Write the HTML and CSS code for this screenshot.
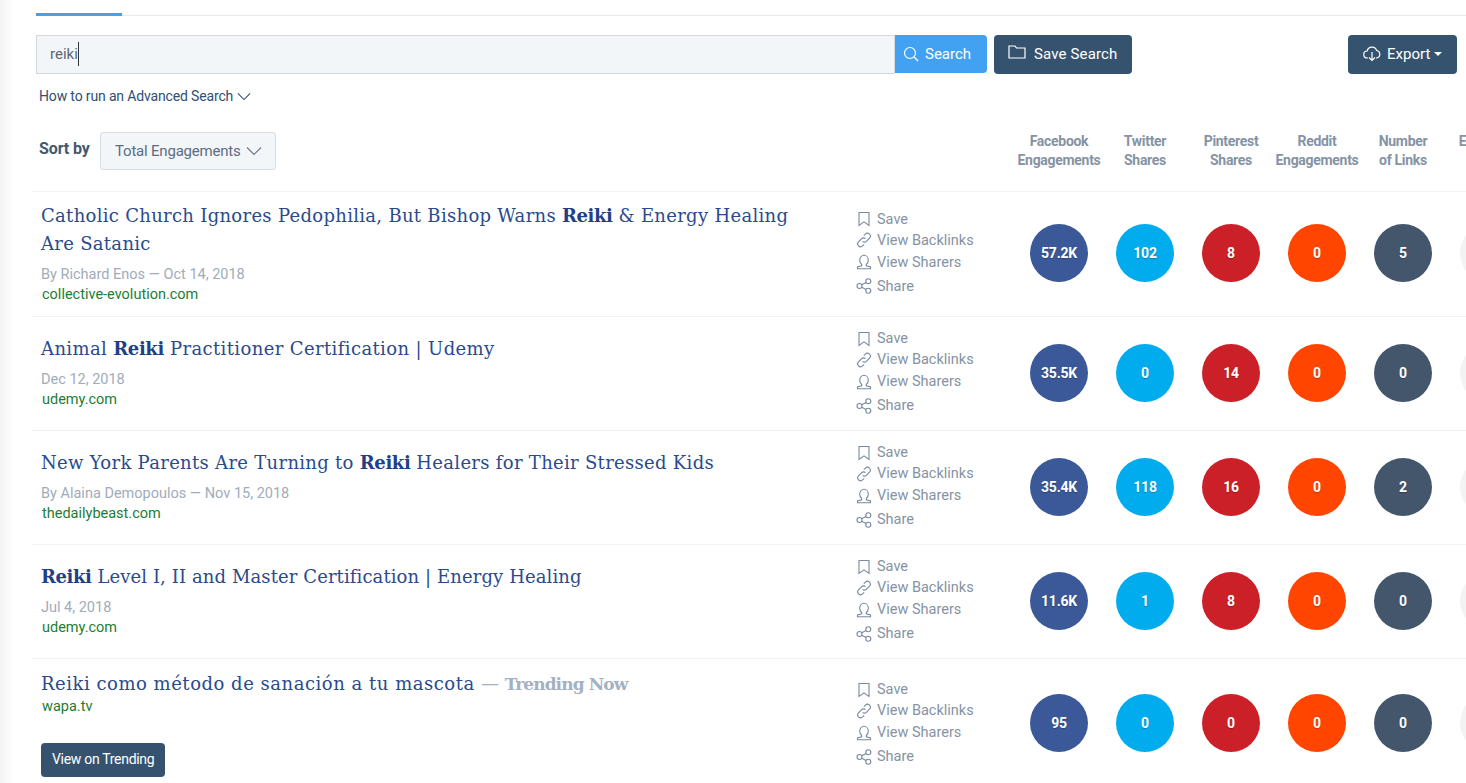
FILE: index.html
```html
<!DOCTYPE html>
<html lang="en">
<head>
  <meta charset="UTF-8" />
  <title>Content Analyzer</title>
  <link rel="stylesheet" href="styles.css">
</head>
<body>
  <svg class="icon-defs" width="0" height="0">
    <symbol id="i-save" viewBox="0 0 16 16"><path d="M3 1.500h10v13l-5-3.600-5 3.600z"/></symbol>
    <symbol id="i-link" viewBox="0 0 16 16"><path d="M6.600 9.400a2.600 2.600 0 0 0 3.700 0l3.200-3.200a2.900 2.900 0 0 0-4.100-4.100L7.800 3.700"/><path d="M9.400 6.600a2.600 2.600 0 0 0-3.700 0l-3.200 3.200a2.900 2.900 0 0 0 4.100 4.100l1.600-1.600"/></symbol>
    <symbol id="i-user" viewBox="0 0 16 16"><path d="M5.700 10.500C4.300 9.500 3.700 8 3.700 6.300 3.700 3.500 5.500 1.300 8 1.300s4.300 2.200 4.300 5c0 1.700-.6 3.200-2 4.200v1.300l4.200 1.200v1.700h-13v-1.700l4.200-1.200z"/></symbol>
    <symbol id="i-share" viewBox="0 0 16 16"><circle cx="3.500" cy="8" r="2.500"/><circle cx="12.300" cy="3.300" r="2.500"/><circle cx="12.300" cy="12.700" r="2.500"/><path d="M5.700 6.800l4.400-2.300M5.700 9.200l4.400 2.300"/></symbol>
    <symbol id="i-chev" viewBox="0 0 16 10"><path d="M1 1.500l7 7 7-7"/></symbol>
  </svg>

  <div class="page">
    <div class="tabs"><div class="tab-active"></div></div>

    <div class="search-row">
      <div class="search-box"><span class="search-text">reiki</span></div>
      <button class="btn btn-search">
        <svg class="btn-icon" viewBox="0 0 16 16"><circle cx="7" cy="7" r="5.500"/><path d="M11 11l4 4"/></svg>
        Search
      </button>
      <button class="btn btn-dark btn-save">
        <svg class="btn-icon btn-icon-folder" viewBox="0 0 18 14"><path d="M1 13V1h6l1.500 2H17v10z"/></svg>
        Save Search
      </button>
      <button class="btn btn-dark btn-export">
        <svg class="btn-icon btn-icon-cloud" viewBox="0 0 18 16"><path d="M5 12H4.500a3.500 3.500 0 0 1-.4-7A5 5 0 0 1 13.700 4.500 3.800 3.800 0 0 1 13.500 12H13"/><path d="M9 6v8.500M6 11.500l3 3 3-3"/></svg>
        Export<span class="caret"></span>
      </button>
    </div>

    <a class="advanced">How to run an Advanced Search <svg class="chev chev-dark"><use href="#i-chev"/></svg></a>

    <div class="list-head">
      <div class="sort">
        <span class="sort-label">Sort by</span>
        <div class="sort-select">Total Engagements <svg class="chev chev-sort"><use href="#i-chev"/></svg></div>
      </div>
      <div class="metric-heads">
        <div class="metric-head">Facebook<br>Engagements</div>
        <div class="metric-head">Twitter<br>Shares</div>
        <div class="metric-head">Pinterest<br>Shares</div>
        <div class="metric-head">Reddit<br>Engagements</div>
        <div class="metric-head">Number<br>of Links</div>
        <div class="metric-head">Evergreen<br>Score</div>
      </div>
    </div>

    <div class="result">
      <div class="info">
        <h3 class="title">Catholic Church Ignores Pedophilia, But Bishop Warns <b>Reiki</b> &amp; Energy Healing Are Satanic</h3>
        <div class="byline">By Richard Enos — Oct 14, 2018</div>
        <div class="domain">collective-evolution.com</div>
      </div>
      <ul class="actions">
        <li><svg class="act-icon"><use href="#i-save"/></svg>Save</li>
        <li><svg class="act-icon"><use href="#i-link"/></svg>View Backlinks</li>
        <li><svg class="act-icon"><use href="#i-user"/></svg>View Sharers</li>
        <li><svg class="act-icon"><use href="#i-share"/></svg>Share</li>
      </ul>
      <div class="metrics">
        <div class="circle fb">57.2K</div>
        <div class="circle tw">102</div>
        <div class="circle pin">8</div>
        <div class="circle red">0</div>
        <div class="circle lnk">5</div>
        <div class="circle ever"></div>
      </div>
    </div>

    <div class="result result-short">
      <div class="info">
        <h3 class="title title-wide">Animal <b>Reiki</b> Practitioner Certification | Udemy</h3>
        <div class="byline">Dec 12, 2018</div>
        <div class="domain">udemy.com</div>
      </div>
      <ul class="actions">
        <li><svg class="act-icon"><use href="#i-save"/></svg>Save</li>
        <li><svg class="act-icon"><use href="#i-link"/></svg>View Backlinks</li>
        <li><svg class="act-icon"><use href="#i-user"/></svg>View Sharers</li>
        <li><svg class="act-icon"><use href="#i-share"/></svg>Share</li>
      </ul>
      <div class="metrics">
        <div class="circle fb">35.5K</div>
        <div class="circle tw">0</div>
        <div class="circle pin">14</div>
        <div class="circle red">0</div>
        <div class="circle lnk">0</div>
        <div class="circle ever"></div>
      </div>
    </div>

    <div class="result result-short">
      <div class="info">
        <h3 class="title">New York Parents Are Turning to <b>Reiki</b> Healers for Their Stressed Kids</h3>
        <div class="byline">By Alaina Demopoulos — Nov 15, 2018</div>
        <div class="domain">thedailybeast.com</div>
      </div>
      <ul class="actions">
        <li><svg class="act-icon"><use href="#i-save"/></svg>Save</li>
        <li><svg class="act-icon"><use href="#i-link"/></svg>View Backlinks</li>
        <li><svg class="act-icon"><use href="#i-user"/></svg>View Sharers</li>
        <li><svg class="act-icon"><use href="#i-share"/></svg>Share</li>
      </ul>
      <div class="metrics">
        <div class="circle fb">35.4K</div>
        <div class="circle tw">118</div>
        <div class="circle pin">16</div>
        <div class="circle red">0</div>
        <div class="circle lnk">2</div>
        <div class="circle ever"></div>
      </div>
    </div>

    <div class="result result-short">
      <div class="info">
        <h3 class="title title-tight"><b>Reiki</b> Level I, II and Master Certification | Energy Healing</h3>
        <div class="byline">Jul 4, 2018</div>
        <div class="domain">udemy.com</div>
      </div>
      <ul class="actions">
        <li><svg class="act-icon"><use href="#i-save"/></svg>Save</li>
        <li><svg class="act-icon"><use href="#i-link"/></svg>View Backlinks</li>
        <li><svg class="act-icon"><use href="#i-user"/></svg>View Sharers</li>
        <li><svg class="act-icon"><use href="#i-share"/></svg>Share</li>
      </ul>
      <div class="metrics">
        <div class="circle fb">11.6K</div>
        <div class="circle tw">1</div>
        <div class="circle pin">8</div>
        <div class="circle red">0</div>
        <div class="circle lnk">0</div>
        <div class="circle ever"></div>
      </div>
    </div>

    <div class="result result-trending">
      <div class="info">
        <h3 class="title title-wider">Reiki como método de sanación a tu mascota <span class="trending">— <b>Trending Now</b></span></h3>
        <div class="domain">wapa.tv</div>
        <button class="btn btn-dark btn-trending">View on Trending</button>
      </div>
      <ul class="actions">
        <li><svg class="act-icon"><use href="#i-save"/></svg>Save</li>
        <li><svg class="act-icon"><use href="#i-link"/></svg>View Backlinks</li>
        <li><svg class="act-icon"><use href="#i-user"/></svg>View Sharers</li>
        <li><svg class="act-icon"><use href="#i-share"/></svg>Share</li>
      </ul>
      <div class="metrics">
        <div class="circle fb">95</div>
        <div class="circle tw">0</div>
        <div class="circle pin">0</div>
        <div class="circle red">0</div>
        <div class="circle lnk">0</div>
        <div class="circle ever"></div>
      </div>
    </div>
  </div>
</body>
</html>
```

FILE: styles.css
```css
html, body {
  height: 100%;
  overflow: hidden;
}

body {
  margin: 0;
  font-family: 'Roboto', 'Liberation Sans', sans-serif;
  background: linear-gradient(to right, #f4f4f4, #fbfbfb 10px, #fff 13px);
  color: #3c5068;
}

.icon-defs {
  display: block;
  height: 0;
}

.page {
  padding-left: 36px;
  width: 1600px;
}

.tabs {
  height: 15px;
  border-bottom: 1px solid #e8eaed;
  margin-bottom: 19px;
  position: relative;
}

.tab-active {
  position: absolute;
  left: 0;
  bottom: -1px;
  width: 86px;
  height: 3px;
  background-color: #4a9fe9;
}

/* search row */
.search-row {
  display: flex;
  width: 1421px;
}

.search-box {
  width: 859px;
  height: 39px;
  box-sizing: border-box;
  background-color: #f3f6f9;
  border: 1px solid #d3d9df;
  padding-left: 13px;
  font-size: 15px;
  line-height: 36px;
  color: #5d6670;
}

.search-text {
  border-right: 1px solid #333;
  padding: 3px 0;
}

.btn {
  border: none;
  font-family: inherit;
  color: #fff;
  font-size: 15px;
  border-radius: 4px;
  display: flex;
  align-items: center;
  justify-content: flex-start;
  padding: 0 0 2px;
}

.btn-icon {
  fill: none;
  stroke: #fff;
  stroke-width: 1.2;
  width: 16px;
  height: 16px;
  margin-right: 6px;
}

.btn-icon-folder {
  width: 18px;
  height: 14px;
  margin-right: 8px;
  margin-top: -3px;
}

.btn-icon-cloud {
  width: 18px;
  height: 16px;
  margin-right: 6px;
}

.btn-search {
  width: 92px;
  height: 38px;
  padding: 0 0 1px 8px;
  background-color: #42a1f1;
  border-radius: 0 4px 4px 0;
}

.btn-dark {
  background-color: #35536f;
}

.btn-save {
  width: 138px;
  height: 39px;
  margin-left: 7px;
  padding-left: 14px;
  letter-spacing: 0.15px;
}

.btn-export {
  width: 109px;
  height: 39px;
  margin-left: auto;
  padding-left: 15px;
}

.caret {
  width: 0;
  height: 0;
  margin-left: 4px;
  border-left: 4px solid transparent;
  border-right: 4px solid transparent;
  border-top: 4px solid #fff;
}

.advanced {
  display: block;
  margin: 14px 0 0 3px;
  font-size: 14px;
  line-height: 17px;
  letter-spacing: -0.15px;
  color: #2f4f73;
}

.chev {
  fill: none;
  stroke-width: 1.2;
}

.chev-dark {
  width: 14px;
  height: 9px;
  stroke: #2f4f73;
}

.chev-sort {
  width: 16px;
  height: 10px;
  margin-left: 2px;
  stroke: #6b7a8c;
}

/* list head */
.list-head {
  display: flex;
  height: 87px;
  margin-left: -4px;
  width: 1600px;
  border-bottom: 1px solid #f1f2f4;
  box-sizing: border-box;
  padding-top: 27px;
}

.sort {
  display: flex;
  align-items: flex-start;
  width: 984px;
  padding-left: 7px;
  box-sizing: border-box;
}

.sort-label {
  font-size: 16px;
  font-weight: 700;
  letter-spacing: -0.1px;
  color: #43586f;
  width: 61px;
  margin-top: 7px;
}

.sort-select {
  width: 176px;
  height: 38px;
  box-sizing: border-box;
  background-color: #f3f6f9;
  border: 1px solid #d8dde2;
  border-radius: 3px;
  padding-left: 14px;
  font-size: 15px;
  line-height: 36px;
  letter-spacing: -0.2px;
  color: #5c6d82;
}

.metric-heads {
  display: flex;
}

.metric-head {
  width: 86px;
  text-align: center;
  font-size: 14px;
  font-weight: 700;
  line-height: 19px;
  letter-spacing: -0.3px;
  color: #8593a4;
}

/* results */
.result {
  display: flex;
  align-items: center;
  min-height: 114px;
  box-sizing: border-box;
  width: 1600px;
  margin-left: -4px;
  padding: 10px 0 12px 9px;
  border-bottom: 1px solid #f1f2f4;
}

.info {
  width: 815px;
  flex-shrink: 0;
}

.result-short .info {
  margin-bottom: 2px;
}

.result-trending {
  padding: 11px 0 10px 9px;
}

.result-trending .domain {
  margin-top: -1px;
}

.result-trending .metrics {
  margin-bottom: 1px;
}

.title {
  margin: 0;
  width: 760px;
  font-family: 'DejaVu Serif', 'Liberation Serif', serif;
  font-size: 18px;
  font-weight: 400;
  line-height: 28px;
  letter-spacing: 0.3px;
  color: #2a4a8c;
}

.title-wide {
  letter-spacing: 0.38px;
}

.title-tight {
  letter-spacing: 0.1px;
}

.title-wider {
  letter-spacing: 0.52px;
}

.title b {
  font-weight: 700;
  letter-spacing: -0.4px;
  color: #1f3f86;
}

.trending {
  letter-spacing: 0;
  color: #a3b1c2;
}

.title .trending b {
  font-size: 17px;
  letter-spacing: -0.9px;
  color: #a3b1c2;
}

.byline {
  font-size: 14.5px;
  line-height: 20px;
  margin-top: 7px;
  color: #a0acba;
}

.domain {
  margin-left: 1px;
  font-size: 14.5px;
  line-height: 19px;
  color: #1c7d34;
}

.btn-trending {
  width: 124px;
  height: 34px;
  margin-top: 27px;
  padding: 0 0 2px 11px;
  font-size: 14px;
  letter-spacing: -0.3px;
}

.actions {
  list-style: none;
  margin: 0 0 1px;
  padding: 0;
  width: 174px;
  flex-shrink: 0;
  font-size: 14.5px;
  color: #8593a4;
}

.actions li {
  display: flex;
  align-items: center;
  height: 22px;
}

.actions li:first-child {
  margin-bottom: -1px;
}

.actions li:nth-child(3) {
  margin-bottom: 2px;
}

.act-icon {
  width: 16px;
  height: 16px;
  margin-right: 5px;
  fill: none;
  stroke: #7889a0;
  stroke-width: 1.1;
}

.metrics {
  display: flex;
  gap: 28px;
}

.circle {
  width: 58px;
  height: 58px;
  border-radius: 50%;
  display: flex;
  align-items: center;
  justify-content: center;
  color: #fff;
  font-size: 14px;
  font-weight: 700;
  letter-spacing: -0.2px;
  text-shadow: 0 1px 1px rgba(0, 0, 0, 0.25);
}

.fb { background-color: #3b5998; }
.tw { background-color: #00acee; }
.pin { background-color: #cb2027; }
.red { background-color: #ff4500; }
.lnk { background-color: #44566c; }
.ever { background-color: #f3f3f3; }
```
